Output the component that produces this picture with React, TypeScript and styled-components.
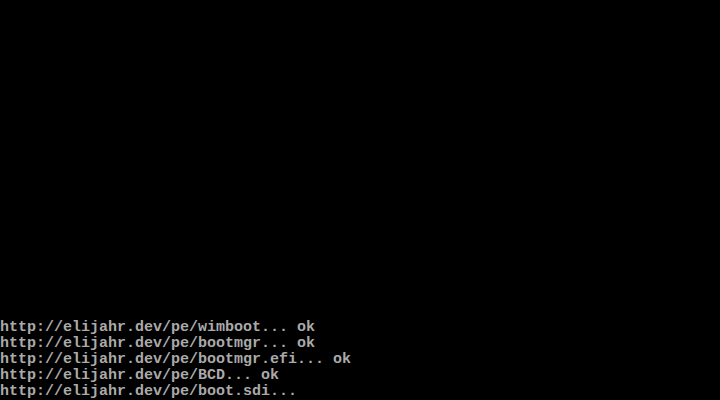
import styled, { createGlobalStyle } from "styled-components";

const GlobalStyle = createGlobalStyle`
  html, body {
    margin: 0;
    padding: 0;
    background: #000000;
  }
`;

const Screen = styled.div`
  width: 720px;
  height: 400px;
  background: #000000;
  display: flex;
  flex-direction: column;
  justify-content: flex-end;
  overflow: hidden;
`;

const Line = styled.div`
  font-family: "Liberation Mono", "DejaVu Sans Mono", monospace;
  font-size: 15px;
  font-weight: bold;
  line-height: 16px;
  height: 16px;
  color: #aaaaaa;
  white-space: pre;
`;

const lines = [
  "http://elijahr.dev/pe/wimboot... ok",
  "http://elijahr.dev/pe/bootmgr... ok",
  "http://elijahr.dev/pe/bootmgr.efi... ok",
  "http://elijahr.dev/pe/BCD... ok",
  "http://elijahr.dev/pe/boot.sdi...",
];

export default function App() {
  return (
    <>
      <GlobalStyle />
      <Screen>
        {lines.map((l, i) => (
          <Line key={i}>{l}</Line>
        ))}
      </Screen>
    </>
  );
}
